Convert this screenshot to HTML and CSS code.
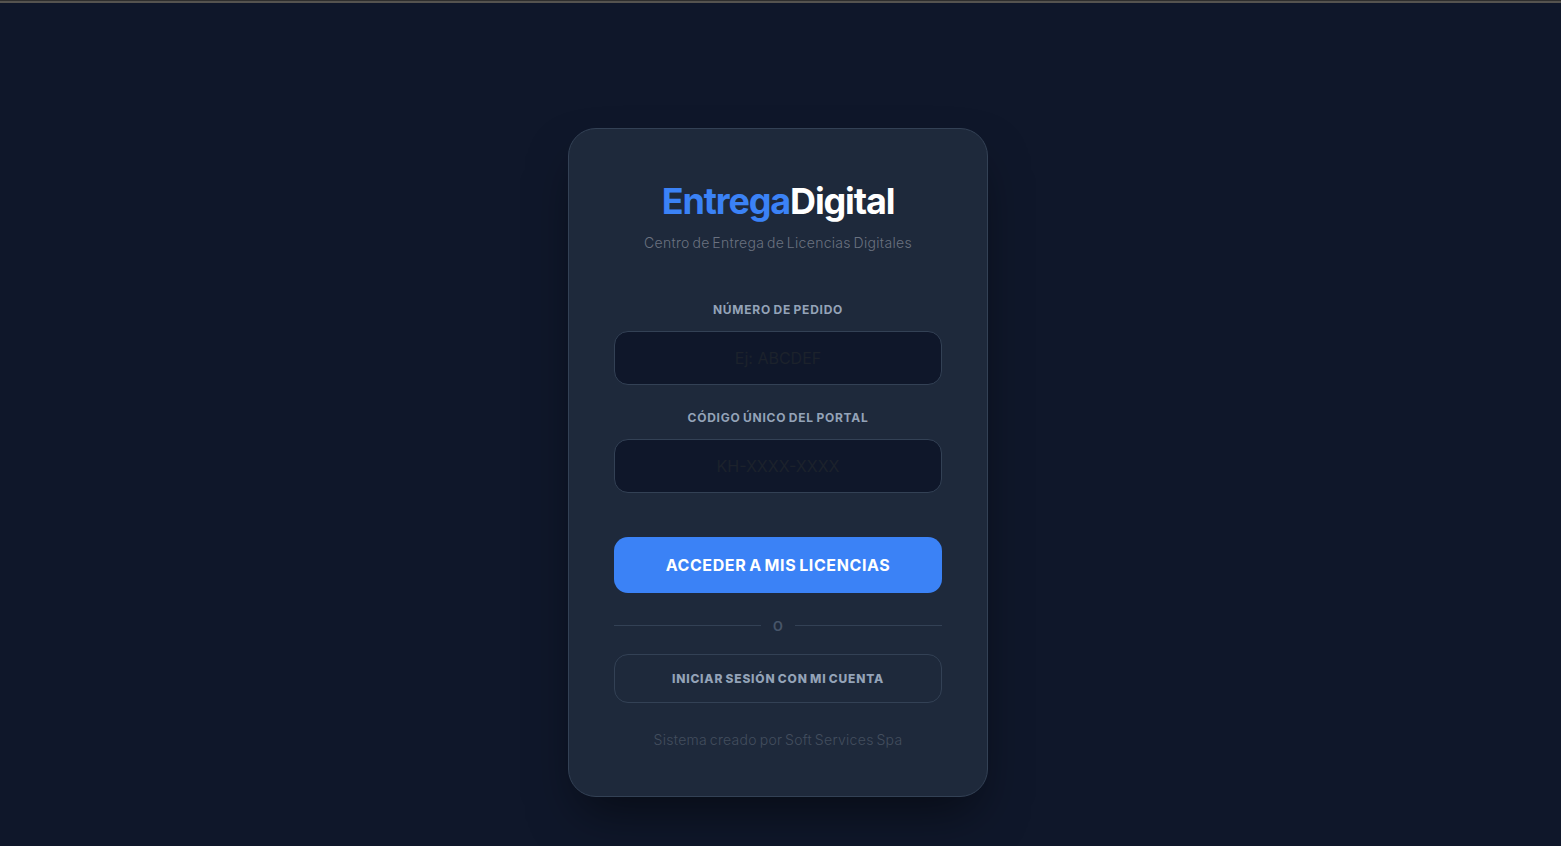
FILE: index.html
```html
<!DOCTYPE html>
<html lang="es">
<head>
  <meta charset="UTF-8">
  <meta name="viewport" content="width=device-width, initial-scale=1.0">
  <title>EntregaDigital</title>
  <link rel="stylesheet" href="styles.css">
</head>
<body>
  <div class="top-line"></div>
  <main class="page">
    <section class="card">
      <h1 class="logo"><span class="logo-blue">Entrega</span>Digital</h1>
      <p class="subtitle">Centro de Entrega de Licencias Digitales</p>
      <form class="login-form">
        <label class="field-label" for="pedido">NÚMERO DE PEDIDO</label>
        <input class="field-input" id="pedido" type="text" placeholder="Ej: ABCDEF">
        <label class="field-label" for="codigo">CÓDIGO ÚNICO DEL PORTAL</label>
        <input class="field-input" id="codigo" type="text" placeholder="KH-XXXX-XXXX">
        <button class="btn-primary" type="button">ACCEDER A MIS LICENCIAS</button>
      </form>
      <div class="divider"><span>o</span></div>
      <a class="btn-outline" href="#">INICIAR SESIÓN CON MI CUENTA</a>
      <p class="credit">Sistema creado por Soft Services Spa</p>
    </section>
  </main>
</body>
</html>
```

FILE: styles.css
```css
* {
  box-sizing: border-box;
}
html, body {
  height: 100%;
}
body {
  margin: 0;
  background-color: #0f172a;
  font-family: Inter, "Open Sans", sans-serif;
  overflow: hidden;
}
.top-line {
  height: 3px;
  background: linear-gradient(#2e2e2e 0, #2e2e2e 1px, #55534f 1px, #55534f 3px);
}
.page {
  display: flex;
  justify-content: center;
  padding-top: 125px;
  padding-right: 5px;
}
.card {
  width: 420px;
  height: 669px;
  padding: 50px 45px 0;
  background-color: #1e293b;
  border: 1px solid #334155;
  border-radius: 28px;
  box-shadow: 0 25px 50px -12px rgba(0, 0, 0, 0.5);
  text-align: center;
}
.logo {
  margin: 0;
  font-size: 36px;
  line-height: 44px;
  font-weight: 700;
  letter-spacing: -1.15px;
  color: #ffffff;
}
.logo-blue {
  color: #3b82f6;
}
.subtitle {
  margin: 10px 0 0;
  font-size: 14px;
  line-height: 20px;
  font-weight: 300;
  letter-spacing: 0.3px;
  word-spacing: -1.5px;
  color: #6b7280;
}
.login-form {
  margin-top: 49px;
}
.field-label {
  display: block;
  font-size: 12px;
  line-height: 16px;
  font-weight: 700;
  letter-spacing: 0.75px;
  word-spacing: -1px;
  color: #94a3b8;
}
.field-input {
  display: block;
  width: 100%;
  height: 54px;
  margin: 13px 0 25px;
  border: 1px solid #334155;
  border-radius: 14px;
  background-color: #0f172a;
  font-family: inherit;
  font-size: 16px;
  text-align: center;
  color: #ffffff;
}
.field-input::placeholder {
  color: #1c222c;
  opacity: 1;
}
.btn-primary {
  display: block;
  width: 100%;
  height: 56px;
  margin-top: 44px;
  border: 0;
  border-radius: 14px;
  background-color: #3b82f6;
  font-family: inherit;
  font-size: 16px;
  font-weight: 700;
  letter-spacing: 0.6px;
  word-spacing: -1.5px;
  color: #ffffff;
}
.divider {
  display: flex;
  align-items: center;
  gap: 12px;
  margin-top: 22px;
  height: 20px;
  font-size: 17px;
  font-weight: 500;
  color: #475569;
}
.divider::before, .divider::after {
  content: "";
  flex: 1;
  height: 1px;
  background-color: #334155;
}
.btn-outline {
  display: block;
  height: 49px;
  margin-top: 19px;
  border: 1px solid #334155;
  border-radius: 14px;
  font-size: 12px;
  line-height: 47px;
  font-weight: 800;
  letter-spacing: 0.8px;
  word-spacing: -1px;
  color: #94a3b8;
  text-decoration: none;
}
.credit {
  margin: 27px 0 0;
  font-size: 14px;
  line-height: 20px;
  font-weight: 300;
  letter-spacing: 0.3px;
  word-spacing: -1.5px;
  color: #434e5e;
}
```
